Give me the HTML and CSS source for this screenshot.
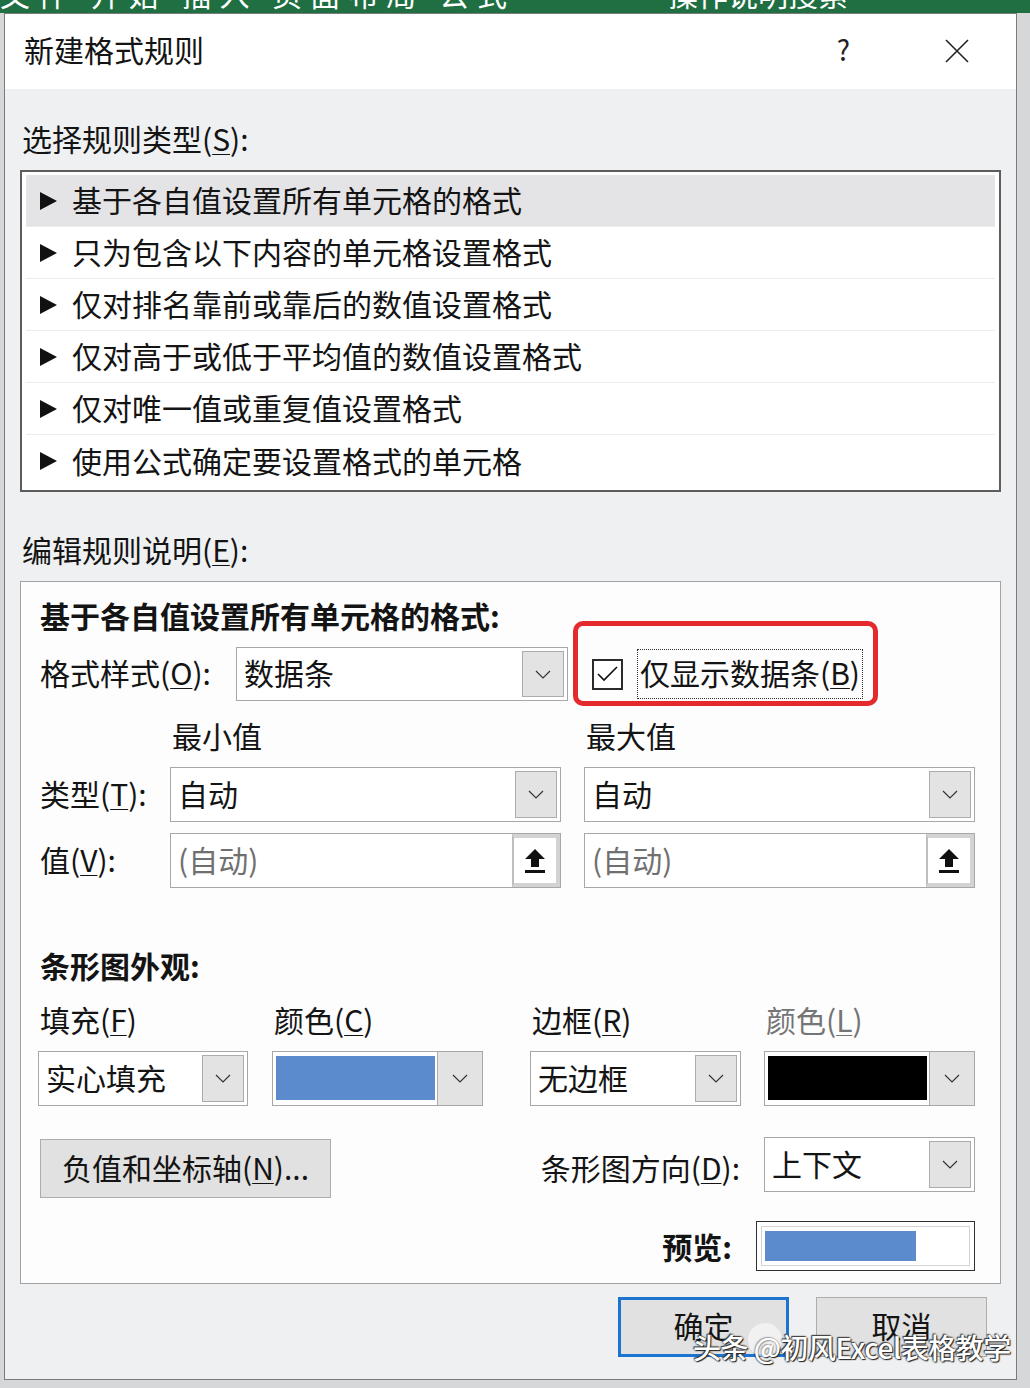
FILE: index.html
```html
<!DOCTYPE html>
<html lang="zh-CN">
<head>
<meta charset="utf-8">
<title>新建格式规则</title>
<link rel="stylesheet" href="styles.css">
</head>
<body>
<div class="appbar"><span class="appbar-left">文件 开始 插入 页面布局 公式</span><span class="appbar-search">操作说明搜索</span></div>
<div class="dialog">
  <div class="titlebar">
    <span class="title">新建格式规则</span>
    <span class="help">?</span>
    <svg class="close" width="24" height="24" viewBox="0 0 24 24"><path d="M1 1 L23 23 M23 1 L1 23" stroke="#222" stroke-width="1.6" fill="none"/></svg>
  </div>
  <div class="body">
    <div class="section-label">选择规则类型(<u>S</u>):</div>
    <div class="rule-list">
      <div class="rule selected"><span class="tri"></span>基于各自值设置所有单元格的格式</div>
      <div class="rule"><span class="tri"></span>只为包含以下内容的单元格设置格式</div>
      <div class="rule"><span class="tri"></span>仅对排名靠前或靠后的数值设置格式</div>
      <div class="rule"><span class="tri"></span>仅对高于或低于平均值的数值设置格式</div>
      <div class="rule"><span class="tri"></span>仅对唯一值或重复值设置格式</div>
      <div class="rule last"><span class="tri"></span>使用公式确定要设置格式的单元格</div>
    </div>
    <div class="section-label second">编辑规则说明(<u>E</u>):</div>
    <div class="edit-box">
      <div class="heading">基于各自值设置所有单元格的格式:</div>
      <div class="style-row">
        <span class="style-label">格式样式(<u>O</u>):</span>
        <div class="select style-select">
          <span class="select-text">数据条</span>
          <span class="select-btn"><svg width="16" height="9" viewBox="0 0 16 9"><polyline points="1,1 8,8 15,1" fill="none" stroke="#333" stroke-width="1.2"/></svg></span>
        </div>
        <div class="showbar">
          <span class="checkbox"><svg width="23" height="18" viewBox="0 0 23 18"><polyline points="2,9 8,15 21,2" fill="none" stroke="#111" stroke-width="1.6"/></svg></span>
          <span class="showbar-label">仅显示数据条(<u>B</u>)</span>
        </div>
      </div>
      <div class="grid3 caps">
        <span></span>
        <span class="cap">最小值</span>
        <span class="cap">最大值</span>
      </div>
      <div class="grid3 field-row">
        <span class="row-label">类型(<u>T</u>):</span>
        <div class="select">
          <span class="select-text">自动</span>
          <span class="select-btn"><svg width="16" height="9" viewBox="0 0 16 9"><polyline points="1,1 8,8 15,1" fill="none" stroke="#333" stroke-width="1.2"/></svg></span>
        </div>
        <div class="select">
          <span class="select-text">自动</span>
          <span class="select-btn"><svg width="16" height="9" viewBox="0 0 16 9"><polyline points="1,1 8,8 15,1" fill="none" stroke="#333" stroke-width="1.2"/></svg></span>
        </div>
      </div>
      <div class="grid3 field-row value-row">
        <span class="row-label">值(<u>V</u>):</span>
        <div class="input">
          <span class="input-text">(自动)</span>
          <span class="ref-btn"><svg width="22" height="26" viewBox="0 0 22 26"><path d="M11 1 L21 11 L15 11 L15 19 L7 19 L7 11 L1 11 Z" fill="#111"/><rect x="1" y="22" width="20" height="3" fill="#111"/></svg></span>
        </div>
        <div class="input">
          <span class="input-text">(自动)</span>
          <span class="ref-btn"><svg width="22" height="26" viewBox="0 0 22 26"><path d="M11 1 L21 11 L15 11 L15 19 L7 19 L7 11 L1 11 Z" fill="#111"/><rect x="1" y="22" width="20" height="3" fill="#111"/></svg></span>
        </div>
      </div>
      <div class="heading bar-heading">条形图外观:</div>
      <div class="grid4 caps4">
        <span class="cap">填充(<u>F</u>)</span>
        <span class="cap">颜色(<u>C</u>)</span>
        <span class="cap">边框(<u>R</u>)</span>
        <span class="cap disabled">颜色(<u>L</u>)</span>
      </div>
      <div class="grid4 sel4">
        <div class="select w210">
          <span class="select-text">实心填充</span>
          <span class="select-btn"><svg width="16" height="9" viewBox="0 0 16 9"><polyline points="1,1 8,8 15,1" fill="none" stroke="#333" stroke-width="1.2"/></svg></span>
        </div>
        <div class="select color-select">
          <span class="swatch blue"></span>
          <span class="select-btn full"><svg width="16" height="9" viewBox="0 0 16 9"><polyline points="1,1 8,8 15,1" fill="none" stroke="#333" stroke-width="1.2"/></svg></span>
        </div>
        <div class="select">
          <span class="select-text">无边框</span>
          <span class="select-btn"><svg width="16" height="9" viewBox="0 0 16 9"><polyline points="1,1 8,8 15,1" fill="none" stroke="#333" stroke-width="1.2"/></svg></span>
        </div>
        <div class="select color-select">
          <span class="swatch black"></span>
          <span class="select-btn full"><svg width="16" height="9" viewBox="0 0 16 9"><polyline points="1,1 8,8 15,1" fill="none" stroke="#333" stroke-width="1.2"/></svg></span>
        </div>
      </div>
      <div class="axis-row">
        <button class="btn axis-btn">负值和坐标轴(<u>N</u>)...</button>
        <span class="dir-label">条形图方向(<u>D</u>):</span>
        <div class="select dir-select">
          <span class="select-text">上下文</span>
          <span class="select-btn"><svg width="16" height="9" viewBox="0 0 16 9"><polyline points="1,1 8,8 15,1" fill="none" stroke="#333" stroke-width="1.2"/></svg></span>
        </div>
      </div>
      <div class="preview-row">
        <span class="preview-label">预览:</span>
        <div class="preview"><div class="preview-inner"><div class="preview-bar"></div></div></div>
      </div>
    </div>
    <div class="footer">
      <button class="btn footer-btn primary">确定</button>
      <button class="btn footer-btn">取消</button>
    </div>
  </div>
</div>
<div class="watermark"><span class="avatar"></span>头条 @初风Excel表格教学</div>
</body>
</html>
```

FILE: styles.css
```css
* { box-sizing: border-box; }
html, body { margin: 0; padding: 0; }
body {
  width: 1030px;
  height: 1388px;
  overflow: hidden;
  position: relative;
  background: #d6d7d9;
  font-family: "Noto Sans CJK SC", "Microsoft YaHei", sans-serif;
  color: #141414;
}
u { text-decoration-thickness: 1px; text-underline-offset: 3px; }

.appbar {
  height: 13px;
  background: #1f6f43;
  overflow: hidden;
  color: #fff;
  font-size: 30px;
  line-height: 30px;
  white-space: nowrap;
  display: flex;
}
.appbar-left { margin-top: -22px; width: 668px; letter-spacing: 8px; }
.appbar-search { margin-top: -22px; }

.dialog {
  margin-left: 4px;
  width: 1013px;
  height: 1367px;
  border: 1px solid #7b7b7b;
  background: #eff0f2;
}
.titlebar {
  height: 75px;
  background: #fff;
  display: flex;
  align-items: center;
  padding-left: 19px;
  padding-right: 47px;
  padding-bottom: 5px;
  font-size: 30px;
}
.title { flex: 1; }
.help { font-size: 28px; margin-right: 95px; color: #222; }
.close { display: block; margin-top: 4px; }

.body { padding: 0 15px; }
.section-label {
  margin-top: 29px;
  line-height: 40px;
  height: 43px;
  font-size: 30px;
  padding-left: 2px;
}
.section-label.second { margin-top: 37px; }

.rule-list {
  margin-top: 9px;
  height: 322px;
  border: 2px solid #5d5d5d;
  background: #fff;
  padding: 3px 4px;
}
.rule {
  height: 52px;
  display: flex;
  align-items: center;
  font-size: 30px;
  padding-left: 14px;
  padding-bottom: 3px;
  border-bottom: 1px solid #ececec;
}
.rule.last { border-bottom: none; }
.rule.selected { background: #e4e4e6; }
.tri {
  width: 0; height: 0;
  border-top: 9px solid transparent;
  border-bottom: 9px solid transparent;
  border-left: 17px solid #111;
  margin-right: 15px;
  margin-top: 3px;
}

.edit-box {
  margin-top: 9px;
  height: 703px;
  border: 1px solid #a3a3a3;
  background: #fdfdfe;
  padding: 13px 25px 0 19px;
}
.heading {
  font-weight: bold;
  font-size: 30px;
  line-height: 40px;
  height: 43px;
}

.select {
  display: flex;
  align-items: stretch;
  height: 55px;
  border: 1px solid #a7a7a7;
  background: #fff;
}
.select-text {
  flex: 1;
  font-size: 30px;
  padding-left: 7px;
  padding-bottom: 4px;
  display: flex;
  align-items: center;
}
.select-btn {
  width: 42px;
  margin: 3px;
  background: #e3e3e3;
  border: 1px solid #acacac;
  display: flex;
  align-items: center;
  justify-content: center;
}
.select-btn.full { margin: 0; width: 45px; border-top: none; border-bottom: none; border-right: none; border-left: 1px solid #acacac; }

.style-row {
  margin-top: 9px;
  height: 54px;
  display: flex;
  align-items: center;
}
.style-label { width: 196px; font-size: 30px; padding-bottom: 5px; }
.style-select { width: 332px; height: 54px; }
.showbar {
  margin-left: 24px;
  position: relative;
  display: flex;
  align-items: center;
}
.showbar::after {
  content: "";
  position: absolute;
  left: -19px;
  top: -28px;
  right: -15px;
  bottom: -7px;
  border: 5px solid #e52a2e;
  border-radius: 10px;
}
.checkbox {
  width: 31px;
  height: 31px;
  border: 2px solid #2b2b2b;
  background: #fff;
  display: flex;
  align-items: center;
  justify-content: center;
}
.showbar-label {
  margin-left: 14px;
  height: 50px;
  border: 1px dotted #333;
  padding: 0 2px 4px;
  font-size: 30px;
  display: flex;
  align-items: center;
}

.grid3 {
  display: grid;
  grid-template-columns: 130px 414px 391px;
}
.grid3 > .select, .grid3 > .input { width: 391px; }
.caps { margin-top: 14px; height: 43px; line-height: 40px; font-size: 30px; }
.cap { padding-left: 2px; font-size: 30px; line-height: 40px; }
.field-row { margin-top: 9px; height: 55px; align-items: center; }
.value-row { margin-top: 11px; }
.row-label { font-size: 30px; padding-bottom: 4px; }

.input {
  display: flex;
  height: 55px;
  border: 1px solid #a7a7a7;
  background: #fff;
}
.input-text {
  flex: 1;
  color: #707070;
  font-size: 30px;
  padding-left: 7px;
  padding-bottom: 4px;
  display: flex;
  align-items: center;
}
.ref-btn {
  width: 48px;
  background: #fff;
  border: 4px solid #d3d3d3;
  border-left: 2px solid #bdbdbd;
  display: flex;
  align-items: center;
  justify-content: center;
}

.bar-heading { margin-top: 57px; }

.grid4 {
  display: grid;
  grid-template-columns: 234px 258px 234px 211px;
  margin-left: -2px;
}
.caps4 { margin-top: 11px; height: 43px; }
.disabled { color: #757575; }
.sel4 { margin-top: 9px; }
.sel4 .select { width: 211px; }
.sel4 .select.w210 { width: 210px; }
.swatch { flex: 1; margin: 4px 2px 5px 3px; }
.swatch.blue { background: #5b8bcd; }
.swatch.black { background: #000; }

.btn {
  font-family: inherit;
  font-size: 30px;
  color: #141414;
  background: #e1e1e1;
  border: 1px solid #adadad;
  padding: 0 0 4px;
  cursor: default;
}
.axis-row {
  margin-top: 31px;
  height: 61px;
  display: flex;
  align-items: flex-start;
}
.axis-btn {
  width: 291px;
  height: 59px;
  margin-top: 2px;
}
.dir-label {
  margin-left: auto;
  margin-right: 24px;
  line-height: 60px;
  font-size: 30px;
}
.dir-select { width: 211px; height: 55px; }

.preview-row {
  margin-top: 23px;
  height: 50px;
  display: flex;
  justify-content: flex-end;
  align-items: center;
}
.preview-label {
  font-weight: bold;
  font-size: 30px;
  margin-right: 24px;
}
.preview {
  width: 219px;
  height: 50px;
  border: 1px solid #303030;
  padding: 4px;
  background: #fff;
}
.preview-inner {
  height: 100%;
  border: 1px solid #d4d4d4;
  padding: 4px 3px;
}
.preview-bar { width: 151px; height: 100%; background: #5b8bcd; }

.footer {
  margin-top: 13px;
  display: flex;
  justify-content: flex-end;
  gap: 27px;
  padding-right: 14px;
}
.footer-btn { width: 171px; height: 60px; }
.footer-btn.primary { border: 3px solid #1a74d0; }

.watermark {
  position: absolute;
  left: 693px;
  top: 1329px;
  font-size: 28px;
  font-weight: 500;
  line-height: 36px;
  color: #fff;
  white-space: nowrap;
  letter-spacing: -0.5px;
  text-shadow: 0 0 2px #222, 1px 1px 1px #222, -1px -1px 1px #444;
}
.avatar {
  position: absolute;
  left: 55px;
  top: -6px;
  width: 34px;
  height: 34px;
  border-radius: 50%;
  background: rgba(255,255,255,0.55);
}
```
